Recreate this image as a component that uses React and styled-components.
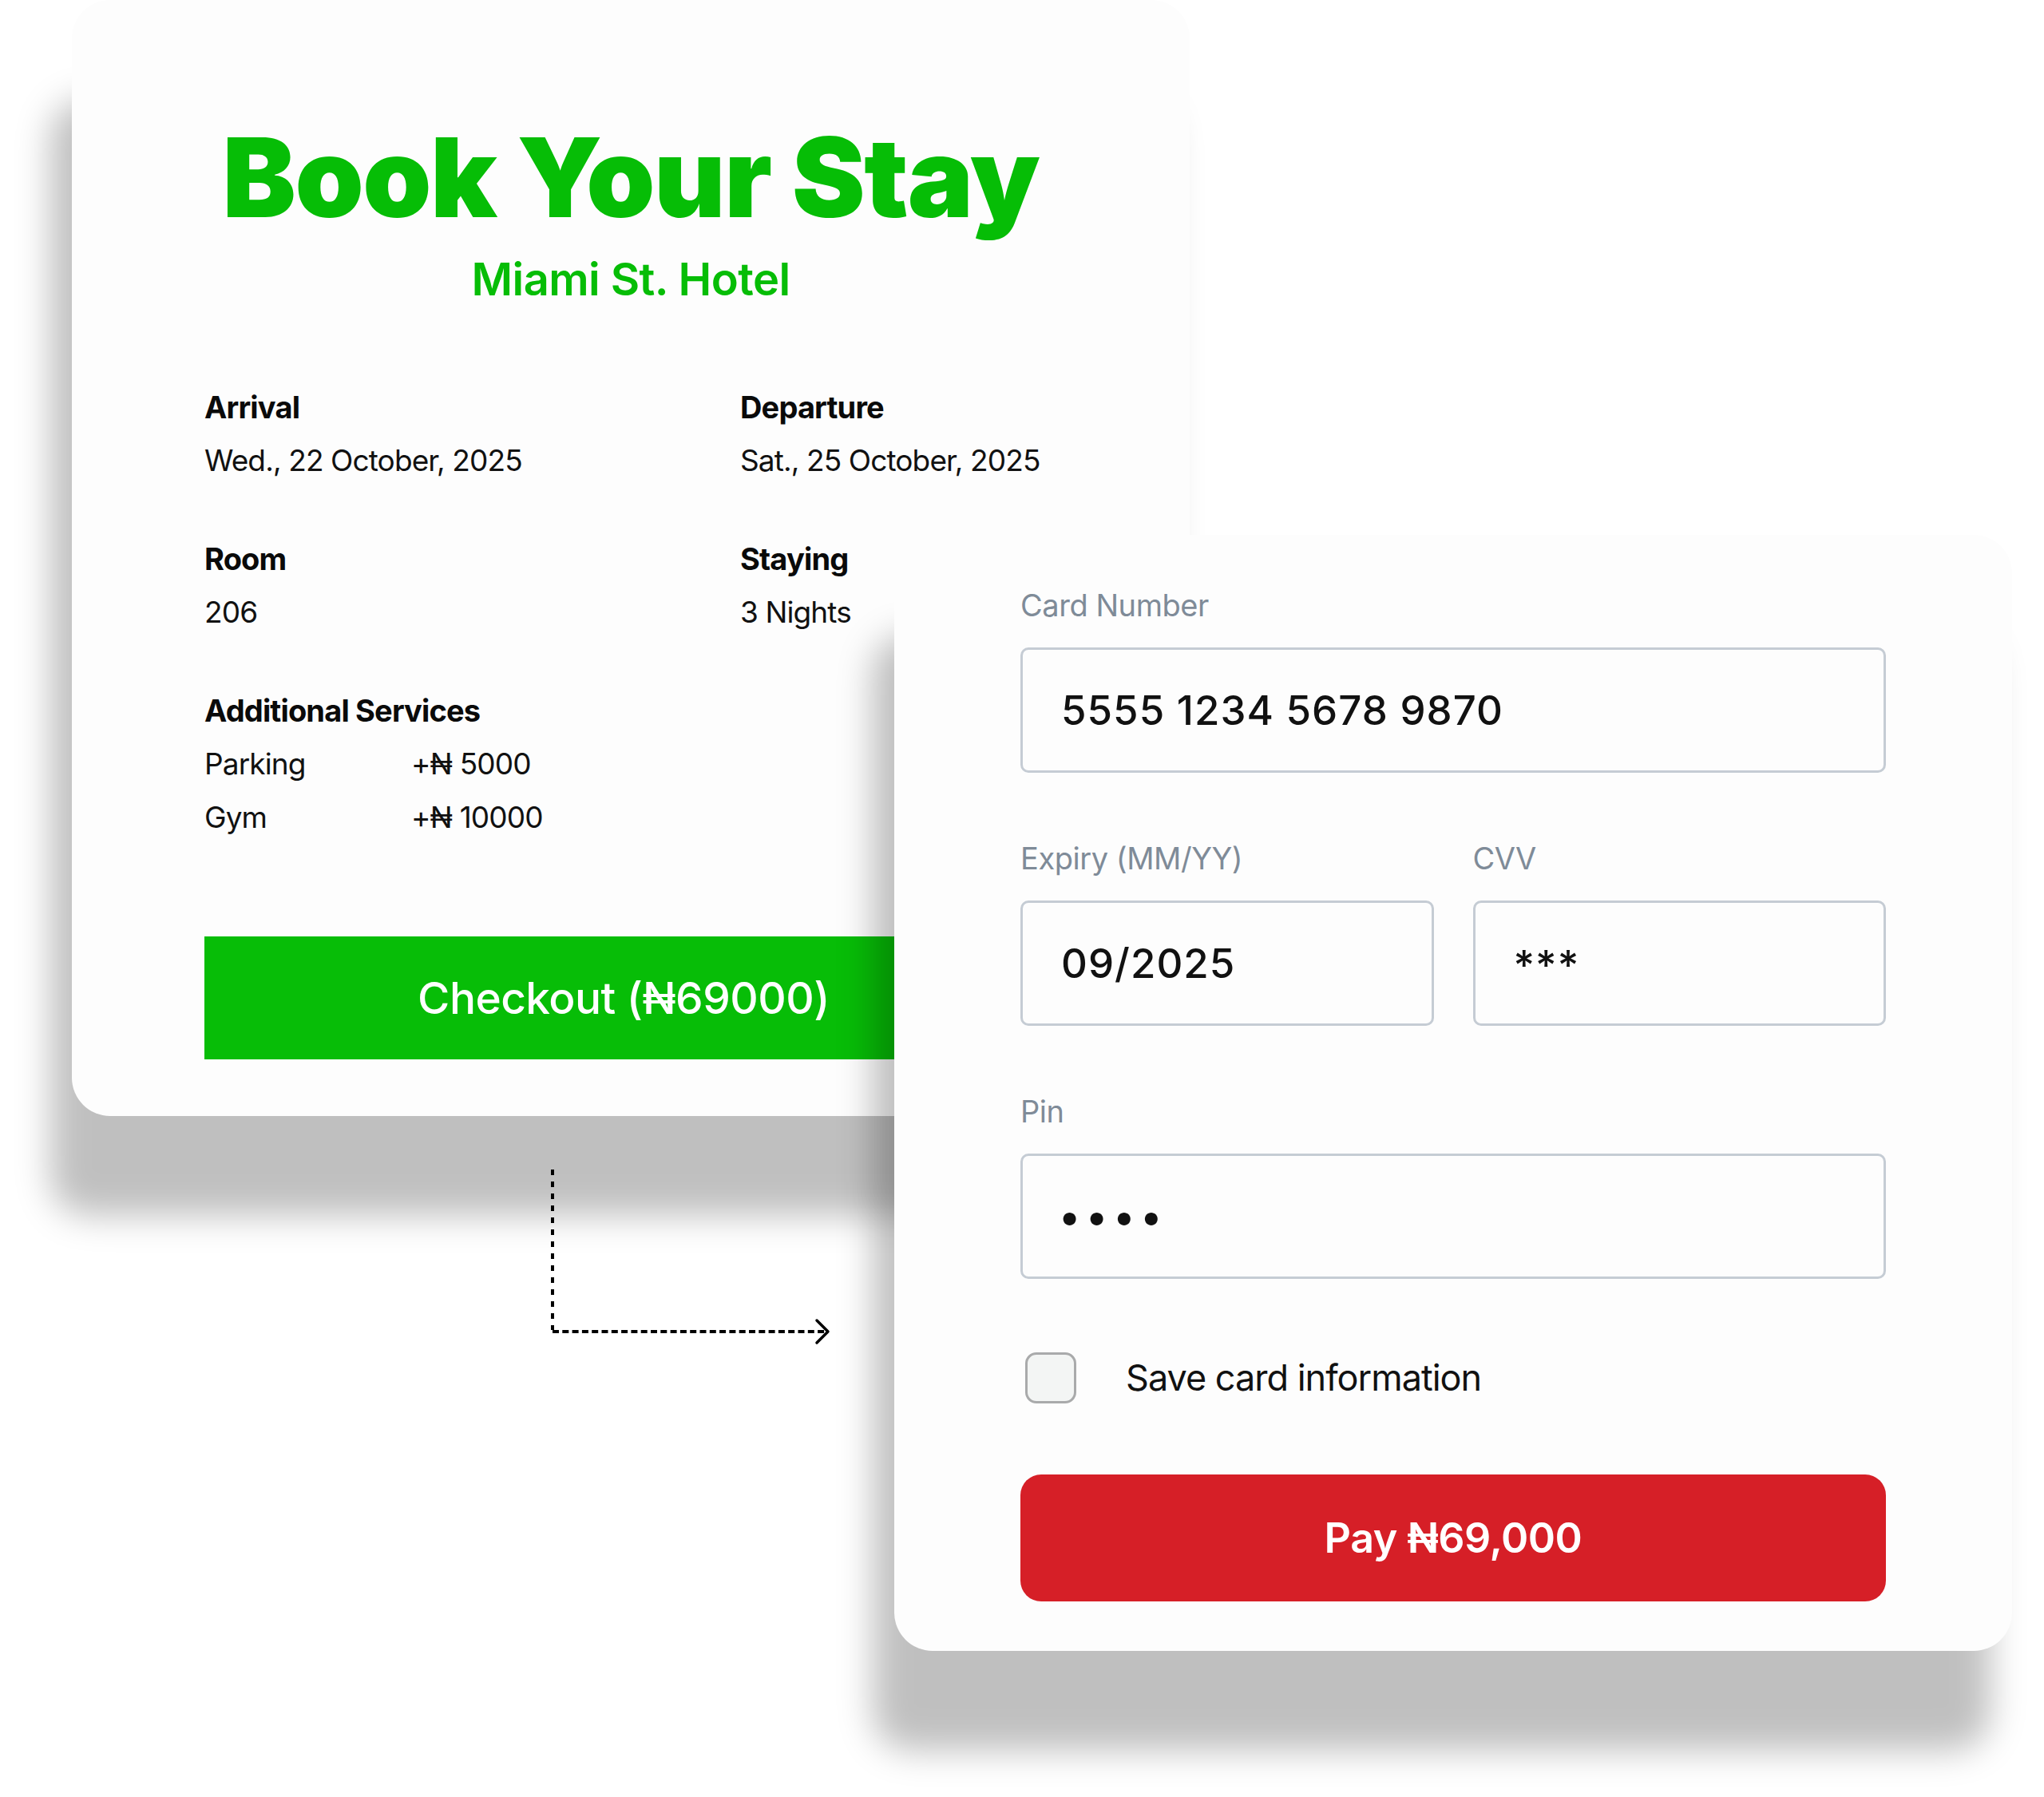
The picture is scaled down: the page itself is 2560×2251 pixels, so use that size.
import React from 'react';
import styled, { createGlobalStyle } from 'styled-components';

const GlobalStyle = createGlobalStyle`
  html, body {
    margin: 0;
    padding: 0;
    background: #ffffff;
  }
  body {
    font-family: Inter, "Noto Sans", "Liberation Sans", sans-serif;
    -webkit-font-smoothing: antialiased;
  }
  * { box-sizing: border-box; }
`;

const Stage = styled.main`
  position: relative;
  width: 2560px;
  height: 2251px;
  display: grid;
  grid-template-columns: 90px 1030px 370px 1030px 40px;
  grid-template-rows: 670px 728px 670px 183px;
  overflow: hidden;
`;

const Card = styled.section`
  position: relative;
  background: #fdfdfd;
  border-radius: 48px;
  box-shadow: -27px 125px 44px rgba(0, 0, 0, 0.25);
  display: flex;
  flex-direction: column;
`;

const BookingCard = styled(Card)`
  grid-column: 2 / 4;
  grid-row: 1 / 3;
  z-index: 1;
  padding: 153px 166px 71px;
`;

const PaymentCard = styled(Card)`
  grid-column: 3 / 5;
  grid-row: 2 / 4;
  z-index: 2;
  padding: 65px 158px 61px;
`;

const Title = styled.h1`
  margin: 0;
  font-size: 138px;
  line-height: 138px;
  font-weight: 900;
  letter-spacing: -0.01em;
  color: #06bd06;
  text-align: center;
  white-space: nowrap;
`;

const Subtitle = styled.h2`
  margin: 31px 0 0;
  font-size: 56px;
  line-height: 56px;
  font-weight: 600;
  letter-spacing: -0.01em;
  color: #06bd06;
  text-align: center;
`;

const InfoGrid = styled.div`
  margin-top: 109px;
  display: grid;
  grid-template-columns: 671px 1fr;
  row-gap: 77px;
`;

const InfoItem = styled.div`
  display: flex;
  flex-direction: column;
  gap: 21px;
  grid-column: ${(p) => (p.$wide ? '1 / -1' : 'auto')};
`;

const InfoLabel = styled.div`
  font-size: 38px;
  line-height: 46px;
  font-weight: 700;
  color: #0a0a0a;
  letter-spacing: -0.022em;
`;

const InfoValue = styled.div`
  font-size: 37px;
  line-height: 46px;
  font-weight: 400;
  color: #111111;
  letter-spacing: -0.024em;
  white-space: nowrap;
`;

const ServiceRow = styled.div`
  display: grid;
  grid-template-columns: 259px auto;
  font-size: 37px;
  line-height: 46px;
  color: #111111;
  letter-spacing: -0.024em;
`;

const CheckoutButton = styled.button`
  margin-top: 126px;
  margin-right: 18px;
  height: 154px;
  border: 0;
  border-radius: 0;
  background: #07bd07;
  color: #ffffff;
  font-family: inherit;
  font-size: 55px;
  font-weight: 500;
  letter-spacing: -0.01em;
  cursor: pointer;
`;

const Field = styled.div`
  display: flex;
  flex-direction: column;
  gap: 30px;
  margin-top: ${(p) => (p.$first ? '0' : '84px')};
`;

const FieldRow = styled.div`
  display: grid;
  grid-template-columns: 1fr 1fr;
  column-gap: 49px;
  margin-top: 84px;

  & > ${Field} {
    margin-top: 0;
  }
`;

const FieldLabel = styled.label`
  font-size: 38px;
  line-height: 46px;
  font-weight: 400;
  color: #7f8b98;
  letter-spacing: -0.012em;
`;

const InputBox = styled.div`
  height: 157px;
  border: 3px solid #c5ccd4;
  border-radius: 10px;
  background: #fdfdfd;
  padding-left: ${(p) => (p.$secret ? '45px' : '48px')};
  display: flex;
  align-items: ${(p) => (p.$stars ? 'flex-start' : 'center')};
  padding-top: ${(p) => (p.$stars ? '47px' : '0')};
  font-size: 51px;
  font-weight: 500;
  color: #111111;
  letter-spacing: ${(p) => (p.$secret ? '0.135em' : '0.02em')};
`;

const CheckRow = styled.label`
  margin-top: 92px;
  display: flex;
  align-items: center;
  gap: 62px;
  padding-left: 6px;
  font-size: 45px;
  line-height: 64px;
  color: #111111;
  letter-spacing: -0.022em;
`;

const CheckBox = styled.span`
  width: 64px;
  height: 64px;
  border: 3px solid #a9aaab;
  border-radius: 14px;
  background: #f3f5f4;
  flex: none;
`;

const PayButton = styled.button`
  margin-top: 89px;
  height: 159px;
  width: 100%;
  border: 0;
  border-radius: 26px;
  background: #d61f27;
  color: #ffffff;
  font-family: inherit;
  font-size: 52px;
  font-weight: 600;
  letter-spacing: -0.01em;
  cursor: pointer;
`;

const Connector = styled.svg`
  position: absolute;
  left: 686px;
  top: 1460px;
  width: 360px;
  height: 230px;
  z-index: 1;
  overflow: visible;
`;

export default function App() {
  return (
    <>
      <GlobalStyle />
      <Stage>
        <BookingCard>
          <Title>Book Your Stay</Title>
          <Subtitle>Miami St. Hotel</Subtitle>
          <InfoGrid>
            <InfoItem>
              <InfoLabel>Arrival</InfoLabel>
              <InfoValue>Wed., 22 October, 2025</InfoValue>
            </InfoItem>
            <InfoItem>
              <InfoLabel>Departure</InfoLabel>
              <InfoValue>Sat., 25 October, 2025</InfoValue>
            </InfoItem>
            <InfoItem>
              <InfoLabel>Room</InfoLabel>
              <InfoValue>206</InfoValue>
            </InfoItem>
            <InfoItem>
              <InfoLabel>Staying</InfoLabel>
              <InfoValue>3 Nights</InfoValue>
            </InfoItem>
            <InfoItem $wide>
              <InfoLabel>Additional Services</InfoLabel>
              <ServiceRow>
                <span>Parking</span>
                <span>+₦ 5000</span>
              </ServiceRow>
              <ServiceRow>
                <span>Gym</span>
                <span>+₦ 10000</span>
              </ServiceRow>
            </InfoItem>
          </InfoGrid>
          <CheckoutButton>Checkout (₦69000)</CheckoutButton>
        </BookingCard>

        <Connector viewBox="0 0 360 230" aria-hidden="true">
          <line x1="6" y1="5" x2="6" y2="206" stroke="#000" strokeWidth="4" strokeDasharray="7 8" />
          <line x1="6" y1="208" x2="348" y2="208" stroke="#000" strokeWidth="4" strokeDasharray="8 4.3" />
          <polyline
            points="337,194 351,208 337,222"
            fill="none"
            stroke="#000"
            strokeWidth="3.5"
            strokeLinecap="round"
            strokeLinejoin="round"
          />
        </Connector>

        <PaymentCard>
          <Field $first>
            <FieldLabel>Card Number</FieldLabel>
            <InputBox>5555 1234 5678 9870</InputBox>
          </Field>
          <FieldRow>
            <Field>
              <FieldLabel>Expiry (MM/YY)</FieldLabel>
              <InputBox>09/2025</InputBox>
            </Field>
            <Field>
              <FieldLabel>CVV</FieldLabel>
              <InputBox $stars>***</InputBox>
            </Field>
          </FieldRow>
          <Field>
            <FieldLabel>Pin</FieldLabel>
            <InputBox $secret>••••</InputBox>
          </Field>
          <CheckRow>
            <CheckBox />
            <span>Save card information</span>
          </CheckRow>
          <PayButton>Pay ₦69,000</PayButton>
        </PaymentCard>
      </Stage>
    </>
  );
}
